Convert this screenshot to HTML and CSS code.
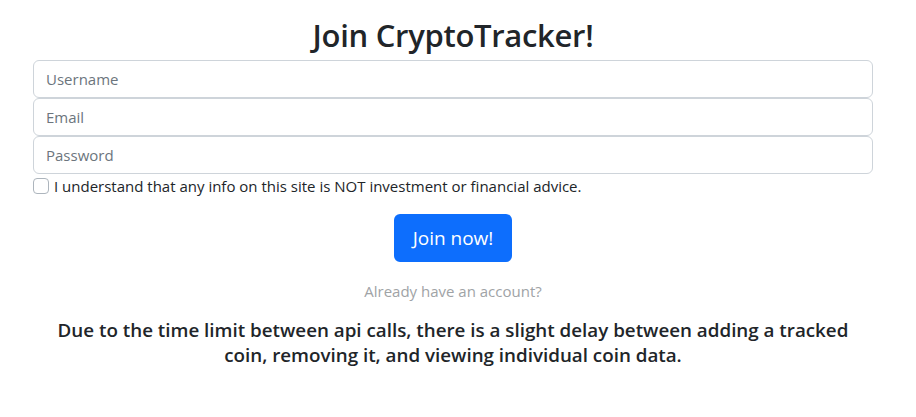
FILE: index.html
```html
<!DOCTYPE html>
<html>
<head>
<meta charset="utf-8">
<link rel="stylesheet" href="styles.css">
</head>
<body>
<main class="page">
  <h1 class="title">Join CryptoTracker!</h1>
  <form class="form">
    <input class="field" type="text" placeholder="Username">
    <input class="field" type="email" placeholder="Email">
    <input class="field" type="password" placeholder="Password">
    <label class="check">
      <span class="box"></span>
      <span>I understand that any info on this site is NOT investment or financial advice.</span>
    </label>
    <div class="actions">
      <button type="button" class="btn">Join now!</button>
    </div>
    <p class="login">Already have an account?</p>
  </form>
  <h5 class="note">Due to the time limit between api calls, there is a slight delay between adding a tracked coin, removing it, and viewing individual coin data.</h5>
</main>
</body>
</html>
```

FILE: styles.css
```css
* { box-sizing: border-box; }
html, body { margin: 0; padding: 0; background: #fff; }
body {
  font-family: "Open Sans", "Noto Sans", sans-serif;
  color: #212529;
  font-size: 16px;
  line-height: 1.5;
}
.page {
  width: 840px;
  margin-left: 33px;
  padding-top: 16px;
}
.title {
  margin: 0 0 5px;
  text-align: center;
  font-size: 31px;
  font-weight: 600;
  line-height: 39px;
  letter-spacing: -0.3px;
}
.form { display: flex; flex-direction: column; }
.field {
  display: block;
  width: 100%;
  height: 38px;
  padding: 6px 12px;
  font: inherit;
  font-size: 15px;
  color: #212529;
  border: 1px solid #ced4da;
  border-radius: 6px;
  background: #fff;
  outline: none;
}
.field::placeholder { color: #6c757d; }
.check {
  display: flex;
  align-items: center;
  gap: 5px;
  height: 24px;
  font-size: 15px;
}
.box {
  width: 16px;
  height: 16px;
  border: 1px solid #adb5bd;
  border-radius: 4px;
  flex: none;
}
.actions {
  display: flex;
  justify-content: center;
  margin-top: 16px;
}
.btn {
  width: 118px;
  height: 48px;
  border: none;
  border-radius: 6px;
  background: #0d6efd;
  color: #fff;
  font: inherit;
  font-size: 19px;
  cursor: pointer;
}
.login {
  margin: 17px 0 0;
  text-align: center;
  color: #a0a3a6;
  font-size: 15px;
  line-height: 24px;
}
.note {
  margin: 15px 0 0;
  padding: 0 10px;
  text-align: center;
  font-size: 18.8px;
  font-weight: 600;
  line-height: 25px;
}
```
